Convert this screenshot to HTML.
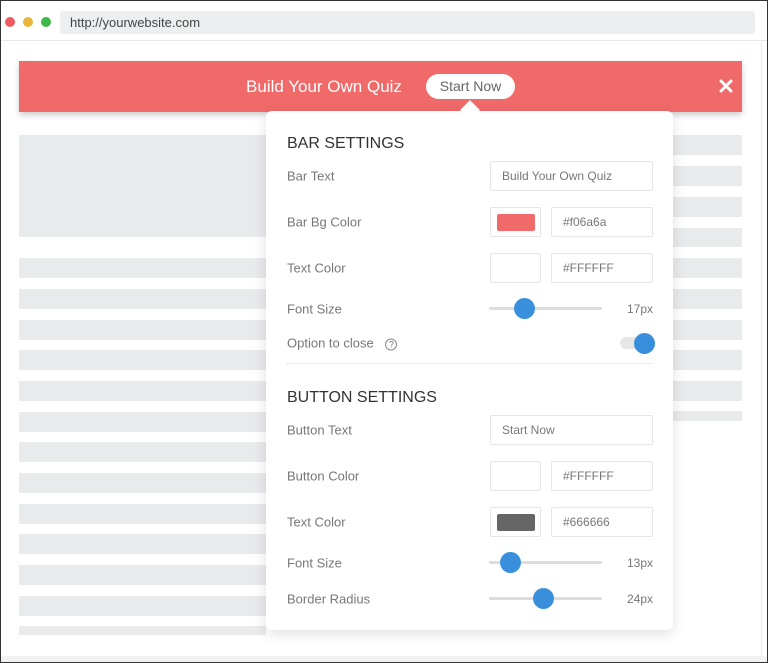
<!DOCTYPE html>
<html><head><style>
*{margin:0;padding:0;box-sizing:border-box}
body{width:768px;height:663px;position:relative;overflow:hidden;background:#fff;font-family:"Liberation Sans",sans-serif}
.a{position:absolute}
.g{position:absolute;background:#e9eaec}
.lbl{position:absolute;left:21px;font-size:13px;color:#777;transform:translateY(-50%)}
.h{position:absolute;left:21px;font-size:16px;color:#333;transform:translateY(-50%)}
.in{position:absolute;border:1px solid #e6e6e6;border-radius:2px;font-size:12px;color:#777;padding-left:11px;display:flex;align-items:center;background:#fff}
.track{position:absolute;left:223px;width:113px;height:3px;background:#ddd;border-radius:2px}
.th{position:absolute;width:21px;height:21px;border-radius:50%;background:#3a8fdc}
.val{position:absolute;right:20px;font-size:12px;color:#777;transform:translateY(-50%)}
</style></head><body>
<div class="a" style="left:0;top:656px;width:768px;height:7px;background:#f2f2f2"></div>
<div class="a" style="left:5px;top:17px;width:10px;height:10px;border-radius:50%;background:#ed5b5e"></div>
<div class="a" style="left:23px;top:17px;width:10px;height:10px;border-radius:50%;background:#e7b73a"></div>
<div class="a" style="left:41px;top:17px;width:10px;height:10px;border-radius:50%;background:#3cb84a"></div>
<div class="a" style="left:60px;top:11px;width:695px;height:23px;background:#eceef0;border-radius:3px;font-size:13px;color:#444;padding:4px 0 0 10px">http://yourwebsite.com</div>
<div class="a" style="left:0;top:40px;width:768px;height:1px;background:#e8e8e8"></div>
<div class="a" style="left:761px;top:40px;width:1px;height:617px;background:#e8e8e8"></div>

<div class="g" style="left:19px;top:135px;width:247px;height:102px"></div>
<div class="g" style="left:19px;top:258px;width:247px;height:20px"></div>
<div class="g" style="left:19px;top:289px;width:247px;height:20px"></div>
<div class="g" style="left:19px;top:320px;width:247px;height:20px"></div>
<div class="g" style="left:19px;top:350px;width:247px;height:20px"></div>
<div class="g" style="left:19px;top:381px;width:247px;height:20px"></div>
<div class="g" style="left:19px;top:412px;width:247px;height:20px"></div>
<div class="g" style="left:19px;top:442px;width:247px;height:20px"></div>
<div class="g" style="left:19px;top:473px;width:247px;height:20px"></div>
<div class="g" style="left:19px;top:504px;width:247px;height:20px"></div>
<div class="g" style="left:19px;top:534px;width:247px;height:20px"></div>
<div class="g" style="left:19px;top:565px;width:247px;height:20px"></div>
<div class="g" style="left:19px;top:596px;width:247px;height:20px"></div>
<div class="g" style="left:19px;top:626px;width:247px;height:9px"></div>

<div class="g" style="left:672px;top:135px;width:70px;height:20px"></div>
<div class="g" style="left:672px;top:166px;width:70px;height:20px"></div>
<div class="g" style="left:672px;top:197px;width:70px;height:20px"></div>
<div class="g" style="left:672px;top:228px;width:70px;height:19px"></div>
<div class="g" style="left:672px;top:258px;width:70px;height:20px"></div>
<div class="g" style="left:672px;top:289px;width:70px;height:20px"></div>
<div class="g" style="left:672px;top:320px;width:70px;height:20px"></div>
<div class="g" style="left:672px;top:350px;width:70px;height:20px"></div>
<div class="g" style="left:672px;top:381px;width:70px;height:20px"></div>
<div class="g" style="left:672px;top:411px;width:70px;height:10px"></div>

<div class="a" style="left:19px;top:61px;width:723px;height:51px;background:#f06a6a;box-shadow:0 3px 6px rgba(0,0,0,.2)"></div>
<div class="a" style="left:246px;top:77px;font-size:17px;color:#fff">Build Your Own Quiz</div>
<div class="a" style="left:426px;top:74px;width:89px;height:25px;background:#fff;border-radius:13px;font-size:14px;color:#666;text-align:center;line-height:25px">Start Now</div>
<svg class="a" style="left:719px;top:79px" width="14" height="14" viewBox="0 0 14 14"><path d="M2 2L12 12M12 2L2 12" stroke="#fff" stroke-width="3" stroke-linecap="round"/></svg>

<div class="a" style="left:266px;top:111px;width:407px;height:519px;background:#fff;border-radius:6px;box-shadow:0 4px 14px rgba(0,0,0,.12)">
<div class="a" style="left:197px;top:-8px;width:14px;height:14px;background:#fff;transform:rotate(45deg)"></div>
<div class="h" style="top:33px">BAR SETTINGS</div>
<div class="lbl" style="top:65px">Bar Text</div>
<div class="in" style="left:224px;top:50px;width:163px;height:30px">Build Your Own Quiz</div>
<div class="lbl" style="top:111px">Bar Bg Color</div>
<div class="in" style="left:224px;top:96px;width:51px;height:30px"><div style="width:38px;height:17px;background:#f06a6a;border-radius:2px;margin-left:-5px"></div></div>
<div class="in" style="left:285px;top:96px;width:102px;height:30px">#f06a6a</div>
<div class="lbl" style="top:157px">Text Color</div>
<div class="in" style="left:224px;top:142px;width:51px;height:30px"></div>
<div class="in" style="left:285px;top:142px;width:102px;height:30px">#FFFFFF</div>
<div class="lbl" style="top:198px">Font Size</div>
<div class="track" style="top:196px"></div><div class="th" style="left:248px;top:187px"></div>
<div class="val" style="top:198px">17px</div>
<div class="lbl" style="top:232px">Option to close <span style="display:inline-block;width:12px;height:12px;border:1px solid #888;border-radius:50%;font-size:9px;text-align:center;line-height:11px;margin-left:8px">?</span></div>
<div class="a" style="left:354px;top:226px;width:32px;height:12px;background:#e6e6e6;border-radius:6px"></div>
<div class="th" style="left:368px;top:222px"></div>
<div class="a" style="left:21px;top:252px;width:366px;border-top:1px dotted #ddd"></div>
<div class="h" style="top:287px">BUTTON SETTINGS</div>
<div class="lbl" style="top:319px">Button Text</div>
<div class="in" style="left:224px;top:304px;width:163px;height:30px">Start Now</div>
<div class="lbl" style="top:365px">Button Color</div>
<div class="in" style="left:224px;top:350px;width:51px;height:30px"></div>
<div class="in" style="left:285px;top:350px;width:102px;height:30px">#FFFFFF</div>
<div class="lbl" style="top:411px">Text Color</div>
<div class="in" style="left:224px;top:396px;width:51px;height:30px"><div style="width:38px;height:17px;background:#666;border-radius:2px;margin-left:-5px"></div></div>
<div class="in" style="left:285px;top:396px;width:102px;height:30px">#666666</div>
<div class="lbl" style="top:452px">Font Size</div>
<div class="track" style="top:450px"></div><div class="th" style="left:234px;top:441px"></div>
<div class="val" style="top:452px">13px</div>
<div class="lbl" style="top:488px">Border Radius</div>
<div class="track" style="top:486px"></div><div class="th" style="left:267px;top:477px"></div>
<div class="val" style="top:488px">24px</div>
</div>
<div class="a" style="left:0;top:0;width:768px;height:663px;border:1px solid #333;pointer-events:none"></div>
</body></html>
